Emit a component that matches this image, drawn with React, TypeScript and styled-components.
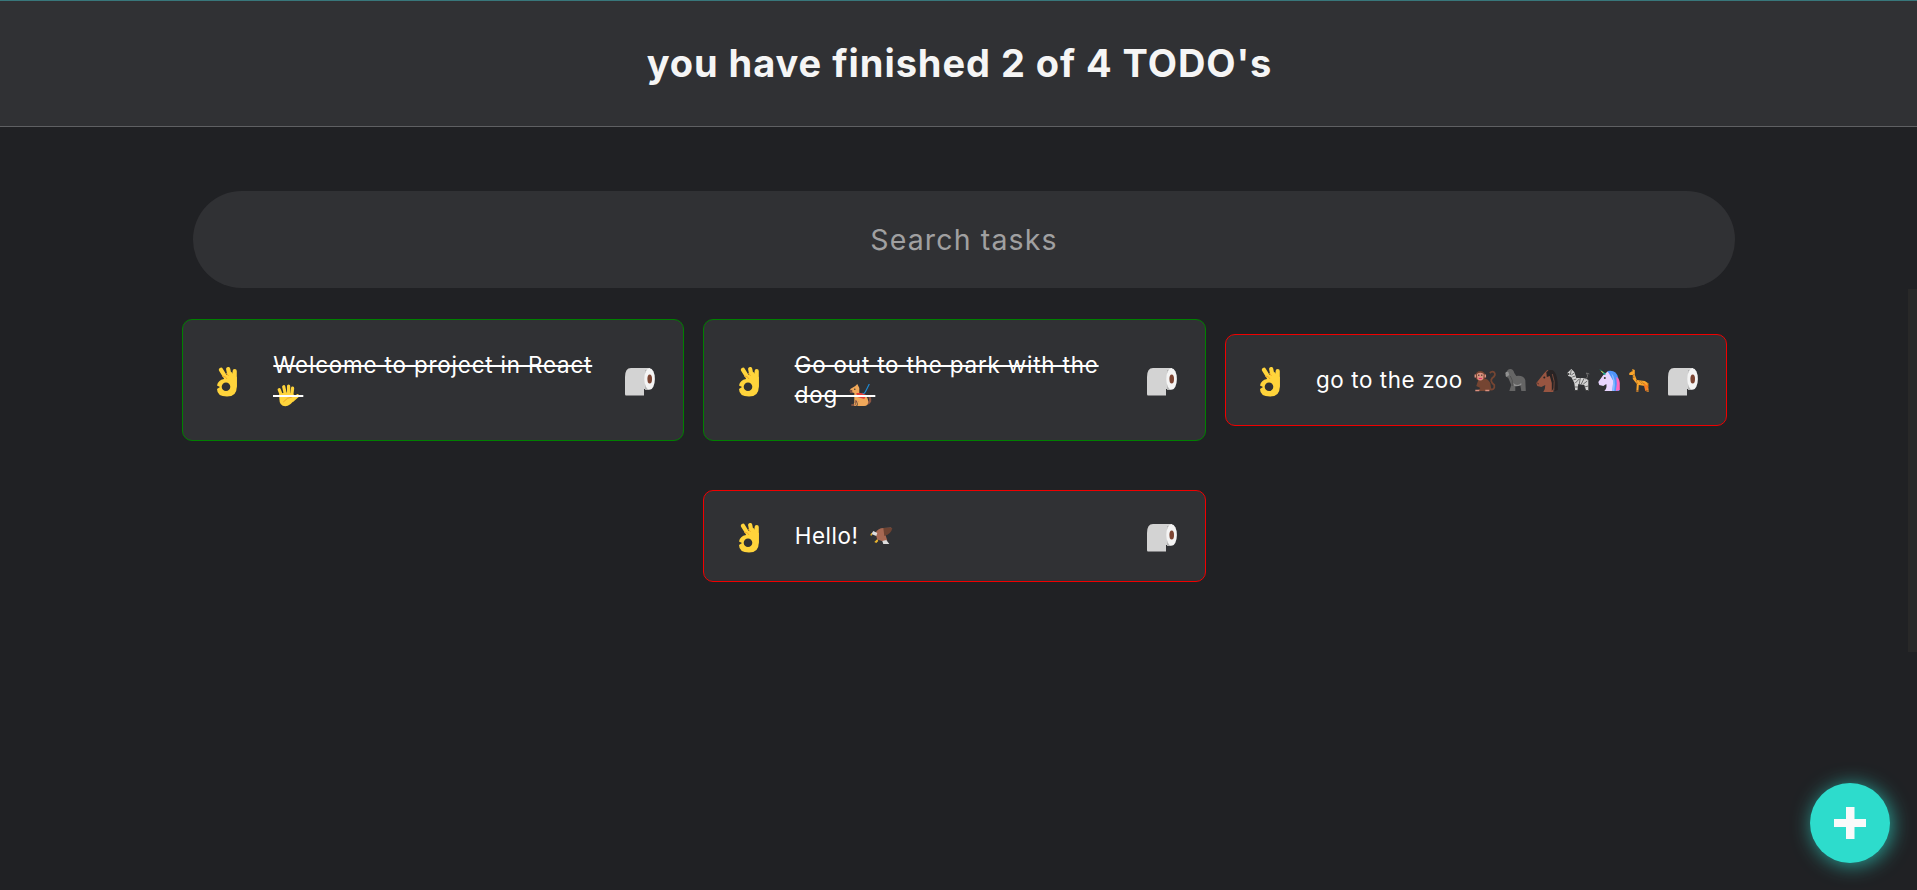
import React from 'react';
import styled, { createGlobalStyle } from 'styled-components';

const GlobalStyle = createGlobalStyle`
  * { box-sizing: border-box; }
  body {
    margin: 0;
    background: #202124;
    color: #fff;
    font-family: Inter, "Open Sans", sans-serif;
    overflow: hidden;
  }
`;

const Page = styled.div`
  display: flex;
  flex-direction: column;
  height: 890px;
  background: #202124;
`;

const Header = styled.header`
  display: flex;
  justify-content: center;
  height: 127px;
  padding: 38px 0 0 2px;
  background: #303134;
  border-top: 1px solid #38777b;
  border-bottom: 1px solid #5f6063;
`;

const Title = styled.h1`
  margin: 0;
  font-size: 38px;
  line-height: 48px;
  font-weight: 700;
  letter-spacing: 0.95px;
  color: #f5f5f5;
  white-space: nowrap;
`;

const SearchBar = styled.div`
  padding: 64px 182px 0 193px;
`;

const SearchInput = styled.input`
  display: block;
  width: 100%;
  height: 97px;
  padding: 0;
  border: 0;
  border-radius: 49px;
  outline: 0;
  background: #303134;
  color: #fff;
  font-family: inherit;
  font-size: 28.5px;
  letter-spacing: 1.15px;
  text-align: center;
  &::placeholder { color: #a0a0a1; opacity: 1; }
`;

const ListArea = styled.div`
  display: flex;
  flex: 1;
  padding-top: 1px;
`;

const List = styled.ul`
  flex: 1;
  display: flex;
  flex-wrap: wrap;
  justify-content: center;
  align-content: flex-start;
  align-items: center;
  gap: 49px 18.8px;
  margin: 0;
  padding: 30px 180px 0 181px;
  list-style: none;
`;

const ScrollThumb = styled.div`
  width: 9px;
  height: 363px;
  background: #282828;
`;

const Card = styled.li<{ $done: boolean }>`
  display: grid;
  grid-template-columns: 56px 352px 30px;
  align-items: center;
  width: 502.5px;
  min-height: 92px;
  padding: 30px 0 30px 34.4px;
  border: 1px solid ${(p) => (p.$done ? '#008000' : '#f00000')};
  border-radius: 10px;
  background: #303134;
`;

const IconButton = styled.button<{ $drop: number }>`
  display: flex;
  align-items: flex-start;
  height: 30px;
  padding: ${(p) => p.$drop}px 0 0;
  border: 0;
  background: none;
`;

const TaskText = styled.p<{ $done: boolean }>`
  width: 345px;
  margin: 0;
  font-size: 22.4px;
  line-height: 30px;
  letter-spacing: ${(p) => (p.$done ? 0.83 : 0.6)}px;
  text-decoration: ${(p) => (p.$done ? 'line-through 2px' : 'none')};
`;

const EmojiSvg = styled.svg`
  display: inline-block;
  vertical-align: -4px;
`;

const AddButton = styled.button`
  position: fixed;
  right: 27px;
  bottom: 27px;
  display: flex;
  align-items: center;
  justify-content: center;
  width: 80px;
  height: 80px;
  padding: 0;
  border: 0;
  border-radius: 50%;
  background: #2ddccc;
  box-shadow: 2px 2px 20px rgba(45, 220, 204, 0.7);
`;

const glyphs: Record<string, React.ReactNode> = {
  wave: (
    <>
      <g stroke="#ffd43b" strokeWidth="3.2" strokeLinecap="round" fill="none">
        <path d="M4.5 12 1.9 5.7M8 10 6.4 2.7M11.3 10V2M14.5 11l.8-6.8M15.5 16l4.8-4.3" />
      </g>
      <path d="M2 10Q9 7 16 10L17.5 15Q13 22.3 8 22.3 2 22.3 2 14Z" fill="#ffd43b" />
      <path d="M6 18Q10 13 15 13" stroke="#eea32a" fill="none" />
    </>
  ),
  dog: (
    <>
      <path d="M13 9Q14.5 11 16.5 7T20 0" stroke="#1e8bd4" strokeWidth="1.2" fill="none" />
      <path d="M17 20Q23 18 20 13" stroke="#8c5543" strokeWidth="2.4" fill="none" />
      <path d="M6 2 8 0l2 4v6q8 0 9 7 0 5-4 5H8l1-5-2 5H3l2-3V9L1 8V5Z" fill="#f0a85a" />
      <path d="M0 6h3v3H1ZM6 16l2 1-2 5M2 20h3v2H2Z" fill="#7d5041" />
      <path d="M7 9h5l5 2-2 4-7-2Z" fill="#e33b36" />
      <circle cx="5.5" cy="5.2" r=".7" fill="#332" />
    </>
  ),
  monkey: (
    <>
      <path d="M14 20Q21 22 20 16 15 12 18 9 22 6 20 3.5 18 1.5 15.5 4" stroke="#754532" strokeWidth="1.8" fill="none" />
      <path d="M4 11Q12 7 16 14l1 6q-1 2-4 2H3l3-3-4-2Z" fill="#754532" />
      <circle cx="6" cy="7" r="5" fill="#754532" />
      <path d="M2.6 5Q6 2.4 9.4 5L9 10Q6 13 3 10Z" fill="#dc9180" />
      <path d="M1 5.5v3M11 5.5v3M1 21.5h4M11 21.5h4" stroke="#dc9180" strokeWidth="1.5" />
      <path d="M4.5 5.5v1.5M7.5 5.5v1.5" stroke="#332" />
      <path d="M4.5 9h3v1h-3Z" fill="#e32667" />
    </>
  ),
  gorilla: (
    <>
      <path d="M1 4Q2 0 5 0q3 0 4 4l2 3q7-1 9 4l.5 11H16l-1-6-5 1v5H4l2-6-3-7-3-2Z" fill="#656565" />
      <path d="M0 4Q1 2 3 3l1 3-3 2ZM8 14q4 4 8 0v2q-4 2-7 1Z" fill="#919191" />
      <path d="M5 7Q8 11 7 17" stroke="#505050" fill="none" />
    </>
  ),
  horse: (
    <>
      <path d="M8 4 11 1l4 3 3 8-1 11H7q2-3 2-7l-4 2-4-1-1-3Z" fill="#985541" />
      <path d="M10 3 13 1h3q6 3 5.5 20l-3 1-1-3-2 3v-8l-2-7-3 1Z" fill="#282324" />
      <path d="M16 5Q19 12 17.5 21" stroke="#74483a" fill="none" />
      <circle cx="8" cy="8.5" r="1" fill="#222" />
      <path d="m1 14 1.5 1" stroke="#4b2924" />
    </>
  ),
  zebra: (
    <>
      <path d="M0 4 4 0l3 3 2 6h8l4 2v11h-2l-2-6-6-1-1 7H8l-1-8-3-6-3-1Z" fill="#d3d3d3" />
      <path d="m4 1-1 5M7 4 4 6M8 7 5 8M9 10l-3 1M8 14l4-4M12 15l1-6M14 15l3-6M16 15l4-3M17 18l4-1M7 18h4" stroke="#515151" strokeWidth=".8" />
      <path d="M18 10q4-2 1-6l3 1" stroke="#6d6d6d" fill="none" />
      <path d="M0 4h2v2H0ZM7 21h4v1H7ZM18 21h3v1h-3Z" fill="#424242" />
    </>
  ),
  unicorn: (
    <>
      <path d="M5 6 10 2l6 2 2 18H6q3-3 2-7l-3 2-4-1-1-3Z" fill="#e8d5ff" />
      <path d="M9 2q9-2 11 7l1 13h-7l1-10-4-7Z" fill="#4f94fb" />
      <path d="M13 4q5 5 3 18h-2l1-10Z" fill="#8abbff" />
      <path d="M18 8q3 1 3.5 6v7l-4 1 1-7Z" fill="#ff67bd" />
      <path d="m1 0 5 6 2-1Z" fill="#18a991" />
      <path d="m3 2 2 2" stroke="#f7c84b" />
      <circle cx="6.5" cy="9" r="1" fill="#332" />
    </>
  ),
  giraffe: (
    <>
      <path d="M0 4 3 2V0l2.5 1v5l2 5 8 1 3 2 1 9h-2l-2-6-6-1-.5 7H7l.5-8-4-5V6L0 6Z" fill="#fba62c" />
      <path d="m14 14 5 3-1 5h-2Z" fill="#f87c22" />
      <path d="M4.5 5v4M7 11l1 4M10 12l3 3M12 12l3 3M3 1v2" stroke="#945b1c" strokeWidth=".8" strokeDasharray="1.5 1" />
      <path d="M19 14v4" stroke="#945b1c" />
      <path d="M6.5 22h3M16.5 22h3" stroke="#70472c" />
    </>
  ),
  eagle: (
    <>
      <path d="M5 8Q8 3 13 3l8-.5q-1 5-6 7l2 6-4 1-6-2Z" fill="#a76852" />
      <path d="M13 3h9q-1 6-8 8Z" fill="#6d4332" />
      <path d="m1 9 2-3 4 2-1 3ZM12 16l4-1 3 4h-6Z" fill="#ddd" />
      <path d="m1 8-1 2 1 1 1-2ZM4 17l3-3 1 2-2 2Z" fill="#e9b52e" />
    </>
  ),
};

function Emoji({ name, struck }: { name: string; struck?: boolean }) {
  return (
    <EmojiSvg width="31" height="23" viewBox="-4.3 0 31 23" aria-hidden="true">
      {glyphs[name]}
      {struck && <rect x="-5.5" y="11" width="31.5" height="2" fill="#fff" />}
    </EmojiSvg>
  );
}

function OkHand() {
  return (
    <svg width="20" height="30" viewBox="0 0 20 30" aria-hidden="true">
      <g stroke="#ffd43b" strokeLinecap="round" strokeWidth="4.2" fill="none">
        <path d="M9 11 4 2.8M13 11l-1.8-8.9M17.7 19V4" />
      </g>
      <path d="M9 8 15 5l4 8-8 1Z" fill="#ffd43b" />
      <path
        fillRule="evenodd"
        fill="#ffd43b"
        d="M7 9Q12 6 19.800 10V20Q19.800 29.500 10 29.500 0 29.500 0 22L3 20 0 18.500Q1 13 7 12ZM9 15.500A4.300 4.300 0 1 0 9 24.100 4.300 4.300 0 1 0 9 15.500Z"
      />
      <path d="M5 9q4 0 5 3M9.5 6l2 3" stroke="#f3aa2c" fill="none" />
    </svg>
  );
}

function PaperRoll() {
  return (
    <svg width="30" height="28" viewBox="0 0 30 28" aria-hidden="true">
      <path d="M6 0H25V21H19V27.5H1Q0 27.5 0 26V9Q0 0 6 0Z" fill="#d3d3d3" />
      <path d="M20 2v20h4l-2-20Z" fill="#b5b5b5" />
      <ellipse cx="24.6" cy="11" rx="5.3" ry="10.8" fill="#f4f4f4" />
      <ellipse cx="24.7" cy="11" rx="2.3" ry="4.5" fill="#7d4533" />
    </svg>
  );
}

type Task = { text: string; emojis: string[]; done: boolean };

const tasks: Task[] = [
  { text: 'Welcome to project in React', emojis: ['wave'], done: true },
  { text: 'Go out to the park with the dog', emojis: ['dog'], done: true },
  { text: 'go to the zoo', emojis: ['monkey', 'gorilla', 'horse', 'zebra', 'unicorn', 'giraffe'], done: false },
  { text: 'Hello!', emojis: ['eagle'], done: false },
];

export default function App() {
  const finished = tasks.filter((t) => t.done).length;
  return (
    <>
      <GlobalStyle />
      <Page>
        <Header>
          <Title>{`you have finished ${finished} of ${tasks.length} TODO's`}</Title>
        </Header>
        <SearchBar>
          <SearchInput placeholder="Search tasks" />
        </SearchBar>
        <ListArea>
          <List>
            {tasks.map((task) => (
              <Card key={task.text} $done={task.done}>
                <IconButton $drop={2} aria-label="Complete"><OkHand /></IconButton>
                <TaskText $done={task.done}>
                  {task.text + ' '}
                  {task.emojis.map((name) => (
                    <Emoji key={name} name={name} struck={task.done} />
                  ))}
                </TaskText>
                <IconButton $drop={3} aria-label="Delete"><PaperRoll /></IconButton>
              </Card>
            ))}
          </List>
          <ScrollThumb />
        </ListArea>
        <AddButton aria-label="Add">
          <svg width="32" height="32" viewBox="0 0 32 32">
            <path d="M12 0h8.5v12H32v8H20.5v12H12V20H0v-8h12Z" fill="#fafafa" />
          </svg>
        </AddButton>
      </Page>
    </>
  );
}
